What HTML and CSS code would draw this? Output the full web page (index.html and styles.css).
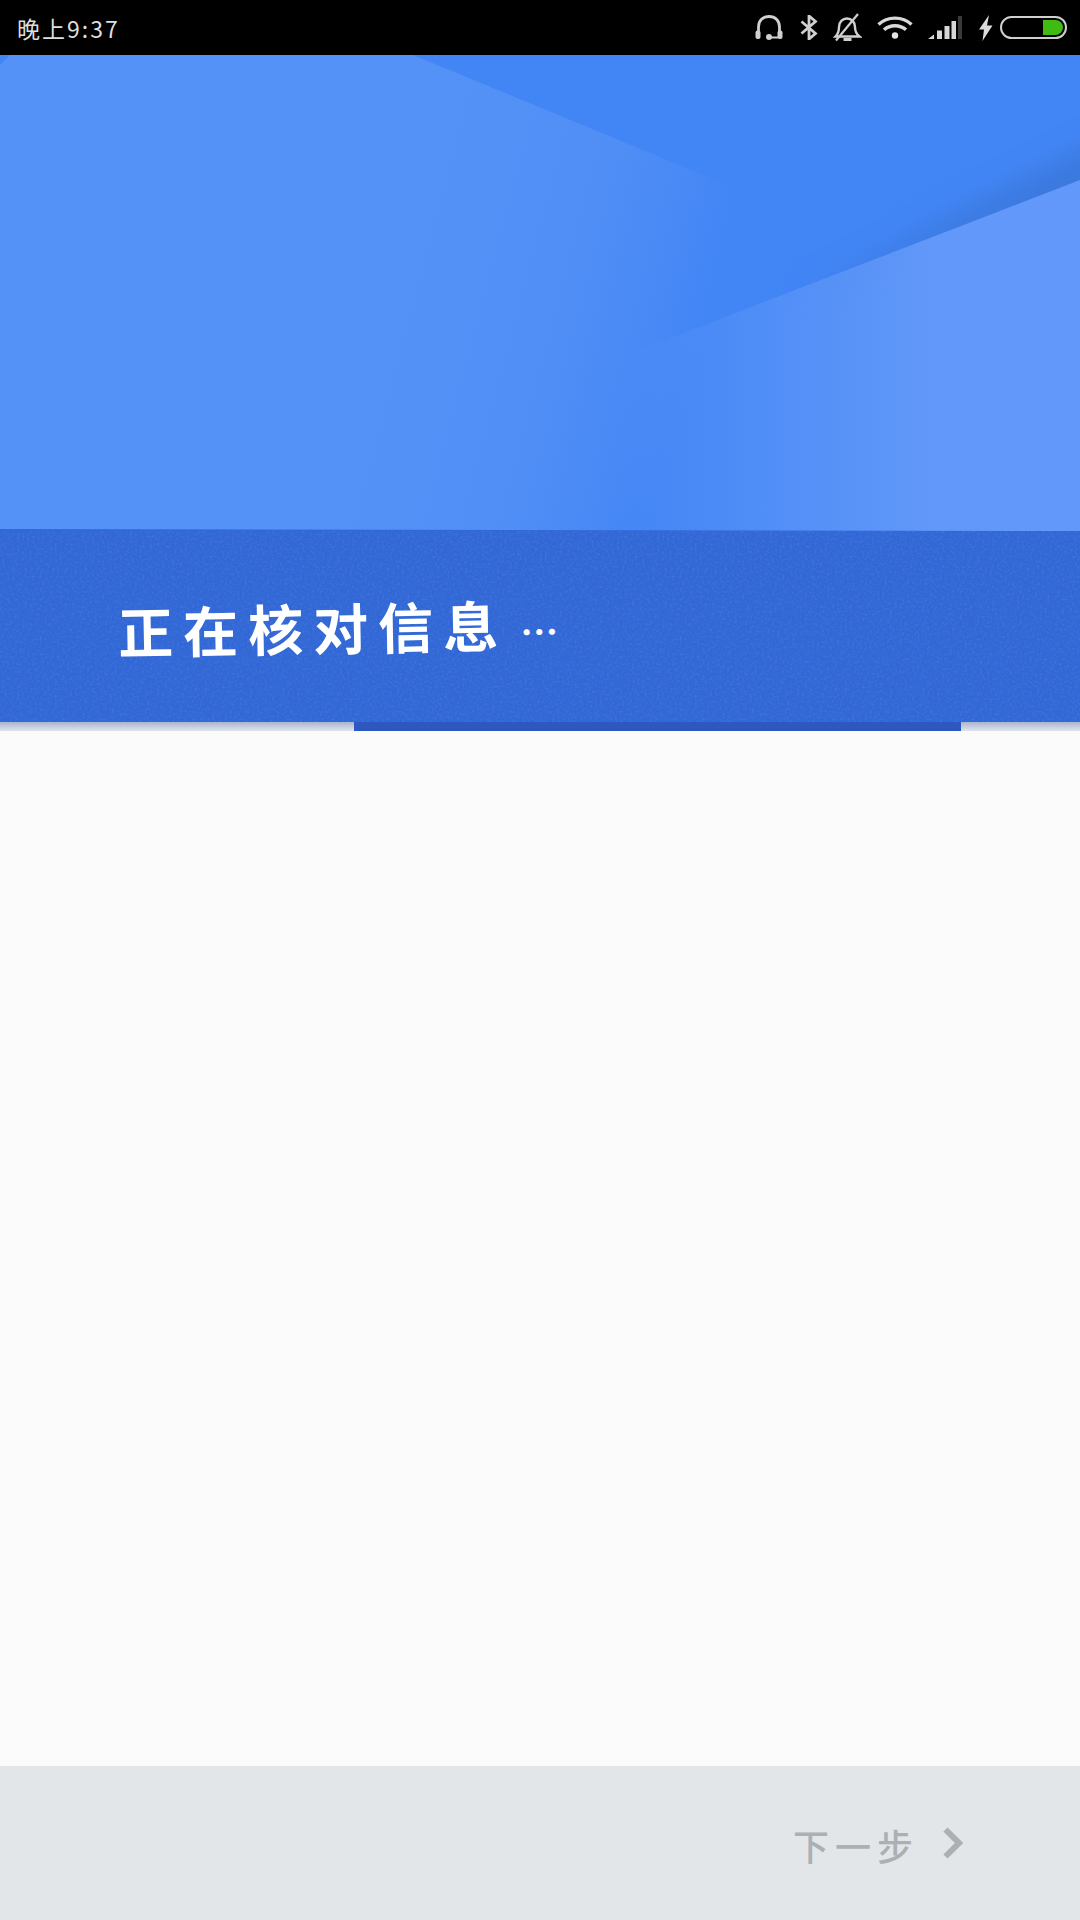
FILE: index.html
```html
<!DOCTYPE html>
<html lang="zh-CN">
<head>
    <meta charset="UTF-8">
    <meta name="viewport" content="width=device-width, user-scalable=no">
    <title>正在核对信息</title>
    <link rel="stylesheet" href="styles.css">
</head>
<body>
<div class="page">
    <!--状态栏-->
    <div class="status">
        <span class="time">晚上9:37</span>
        <div class="icons">
            <svg class="ic-head" viewBox="0 0 28 25" width="28" height="25">
                <path d="M3.500 18V12C3.500 5.500 8 1.500 14 1.500S24.500 5.500 24.500 12V18" fill="none" stroke="#d0d0d0" stroke-width="2.800"/>
                <rect x="0.500" y="15.500" width="5" height="8.500" rx="2" fill="#d0d0d0"/>
                <rect x="22.500" y="15.500" width="5" height="8.500" rx="2" fill="#d0d0d0"/>
                <path d="M14 22.500H23" stroke="#d0d0d0" stroke-width="2"/>
                <circle cx="14" cy="22" r="3" fill="#d0d0d0"/>
            </svg>
            <svg class="ic-bt" viewBox="0 0 18 25" width="18" height="25">
                <path d="M1.500 6.500L15.500 18.500L9 24V1L15.500 6.500L1.500 18.500" fill="none" stroke="#d0d0d0" stroke-width="2.800"/>
            </svg>
            <svg class="ic-bell" viewBox="0 0 29 29" width="29" height="29">
                <path d="M2.500 23.500C5 21 6 19 6 14C6 9 9.500 5.500 14 5.500C18.500 5.500 22 9 22 14C22 19 24 21.500 26.500 23.500Z" fill="none" stroke="#d0d0d0" stroke-width="2.400"/>
                <path d="M10.500 26.500H18.500" stroke="#d0d0d0" stroke-width="3"/>
                <path d="M3 27.500L25 1" stroke="#d0d0d0" stroke-width="2.200"/>
            </svg>
            <svg class="ic-wifi" viewBox="0 0 36 23" width="36" height="23">
                <path d="M1.500 8.500C10.500 0 25.500 0 34.500 8.500" fill="none" stroke="#d8d8d8" stroke-width="3.400"/>
                <path d="M7 13.800C13 8.300 23 8.300 29 13.800" fill="none" stroke="#d8d8d8" stroke-width="3.400"/>
                <circle cx="18" cy="19.500" r="3.200" fill="#e4e4e4"/>
            </svg>
            <svg class="ic-signal" viewBox="0 0 34 23" width="34" height="23">
                <path d="M0 23L6 18.500V23Z" fill="#d8d8d8"/>
                <rect x="9" y="14.500" width="5" height="8.500" fill="#d8d8d8"/>
                <rect x="16.500" y="10" width="5" height="13" fill="#d8d8d8"/>
                <rect x="23.500" y="5" width="4.500" height="18" fill="#d8d8d8"/>
                <rect x="30" y="0" width="4" height="23" fill="#3a3a3a"/>
            </svg>
            <svg class="ic-bolt" viewBox="0 0 15 26" width="15" height="26">
                <path d="M11 0L1 14.500H6L4.500 26L14.500 10.500H9Z" fill="#dcdcdc"/>
            </svg>
            <div class="battery"><span class="level"></span></div>
        </div>
    </div>

    <!--头部区域-->
    <div class="hero">
        <svg class="hero-bg" viewBox="0 0 1080 476" width="1080" height="476">
            <defs>
                <linearGradient id="fadeLeft" gradientUnits="userSpaceOnUse" x1="350" y1="300" x2="678" y2="387">
                    <stop offset="0" stop-color="#5592f7"/>
                    <stop offset="0.6" stop-color="#508ef6"/>
                    <stop offset="1" stop-color="#4285f5"/>
                </linearGradient>
                <linearGradient id="fadeRight" gradientUnits="userSpaceOnUse" x1="620" y1="0" x2="930" y2="0">
                    <stop offset="0" stop-color="#6198f9" stop-opacity="0"/>
                    <stop offset="1" stop-color="#6198f9"/>
                </linearGradient>
                <filter id="soft" x="-20%" y="-50%" width="140%" height="200%">
                    <feGaussianBlur stdDeviation="13"/>
                </filter>
            </defs>
            <rect width="1080" height="476" fill="#4285f5"/>
            <path d="M0 0H413L723 128L1080 476H0Z" fill="url(#fadeLeft)"/>
            <path d="M1100 85V135L800 240Z" fill="#3a78dd" filter="url(#soft)"/>
            <path d="M1080 125L171 476H1080Z" fill="url(#fadeRight)"/>
            <path d="M0 0H10L0 10Z" fill="#4285f5"/>
            <path d="M0 474L1080 476V480H0Z" fill="#3268d6"/>
        </svg>
        <div class="band">
            <!--噪点-->
            <svg class="grain" width="1080" height="191">
                <filter id="noise">
                    <feTurbulence type="fractalNoise" baseFrequency="0.4" numOctaves="2" seed="4"/>
                    <feColorMatrix values="0 0 0 0 0.6  0 0 0 0 0.7  0 0 0 0 1  0 0 0 1.6 -0.72"/>
                </filter>
                <rect width="1080" height="191" filter="url(#noise)" opacity="0.14"/>
            </svg>
            <h1>正在核对信息<span class="dots">…</span></h1>
        </div>
    </div>

    <!--进度条-->
    <div class="progress"><span class="bar"></span></div>

    <!--内容区域-->
    <div class="content"></div>

    <!--底部-->
    <div class="foot">
        <span class="next">下一步</span>
        <svg class="arrow" viewBox="0 0 20 32" width="20" height="32">
            <path d="M2.500 2.500L16 16L2.500 29.500" fill="none" stroke="#abb0b5" stroke-width="6"/>
        </svg>
    </div>
</div>
</body>
</html>
```

FILE: styles.css
```css
*{
    margin: 0;
    padding: 0;
    box-sizing: border-box;
}

body{
    width: 1080px;
    height: 1920px;
    overflow: hidden;
    font-family: "Noto Sans CJK SC", "Noto Sans", sans-serif;
    background: #fbfbfc;
}

.page{
    height: 1920px;
    display: flex;
    flex-direction: column;
}

/* 状态栏 */
.status{
    height: 55px;
    padding: 0 13px 0 17px;
    background: #000;
    display: flex;
    justify-content: space-between;
    align-items: center;
}
.time{
    color: #dedede;
    font-size: 23px;
    line-height: 1;
    letter-spacing: 2px;
    margin-top: 1px;
}
.icons{
    display: flex;
    align-items: center;
    gap: 15px;
}
.icons svg{
    display: block;
}
.ic-head{
    margin-right: 2px;
}
.ic-signal{
    margin-right: 1px;
}
.ic-bolt{
    margin-right: -8px;
}
.battery{
    width: 67px;
    height: 23px;
    border: 2px solid #d0d0d0;
    border-radius: 12px;
    padding: 2px;
    display: flex;
    justify-content: flex-end;
}
.level{
    width: 20px;
    background: #3fbb12;
    border-radius: 0 8px 8px 0;
}

/* 头部 */
.hero-bg{
    display: block;
}
.band{
    position: relative;
    height: 191px;
    padding-left: 118px;
    background: #3268d6;
    display: flex;
    align-items: center;
}
.grain{
    position: absolute;
    left: 0;
    top: 0;
}
h1{
    position: relative;
    color: #fff;
    font-size: 55px;
    font-weight: 700;
    line-height: 1;
    letter-spacing: 10px;
    transform: rotate(-1deg);
}
.dots{
    font-size: 38px;
    font-weight: 700;
    letter-spacing: 0;
    margin-left: 12px;
}

/* 进度条 */
.progress{
    height: 9px;
    padding: 0 119px 0 354px;
    background: linear-gradient(#a9b4cf, #e0e4ed);
}
.bar{
    display: block;
    height: 100%;
    background: #2c58bf;
}

.content{
    flex: 1;
    background: #fbfbfc;
}

/* 底部 */
.foot{
    height: 154px;
    padding: 0 117px 0 0;
    background: #e2e6e9;
    display: flex;
    justify-content: flex-end;
    align-items: center;
    gap: 24px;
}
.next{
    color: #abb0b5;
    font-size: 36px;
    font-weight: 500;
    letter-spacing: 6px;
    line-height: 1;
    margin-top: 4px;
}
.arrow{
    display: block;
}
```
